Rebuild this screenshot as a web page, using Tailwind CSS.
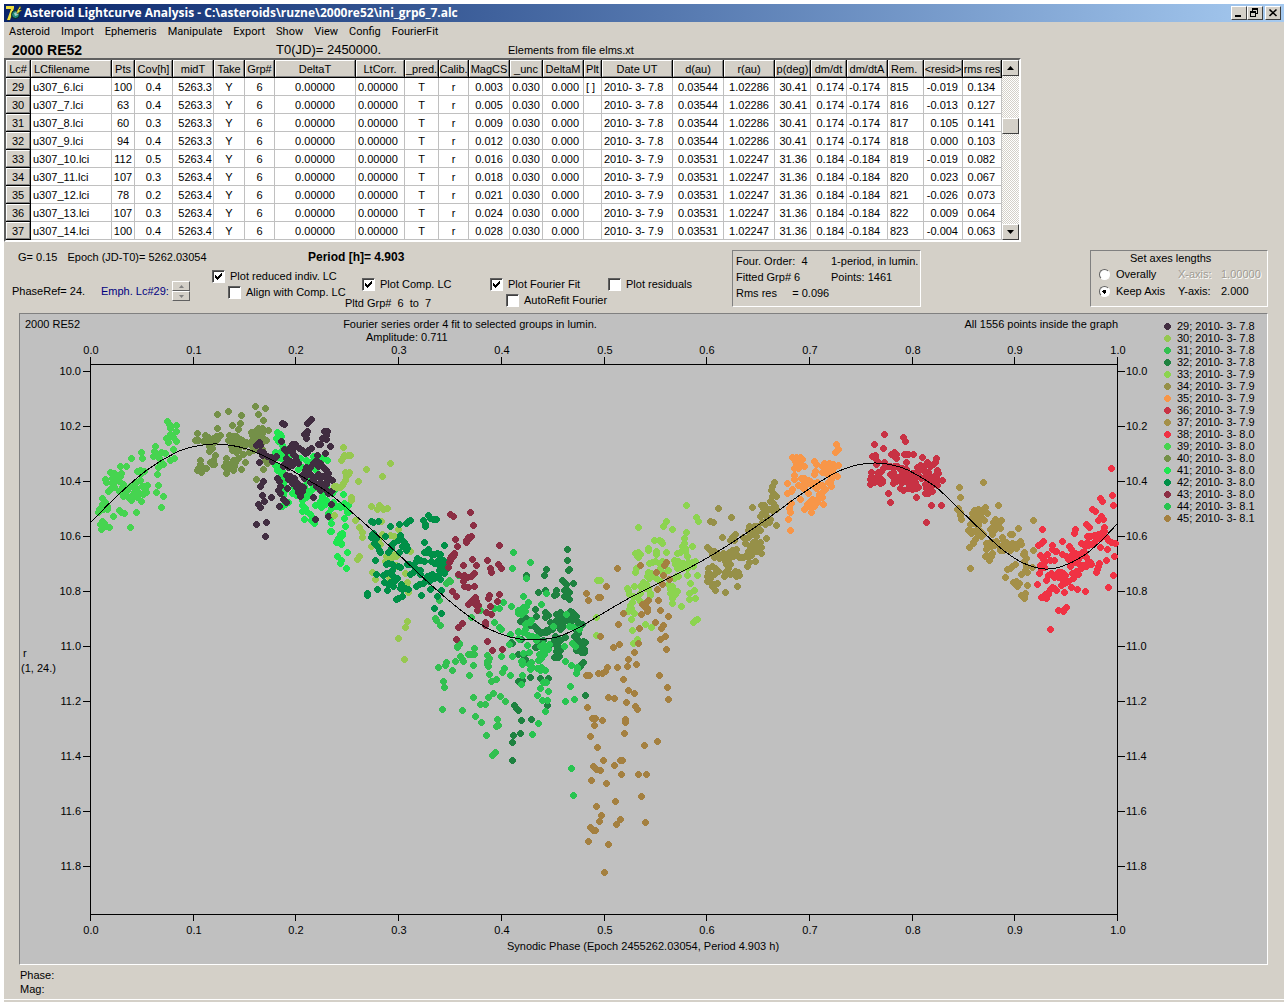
<!DOCTYPE html>
<html lang="en">
<head>
  <meta charset="UTF-8" />
  <meta name="viewport" content="width=device-width, initial-scale=1.0" />
  <title>Asteroid Lightcurve Analysis</title>
  <script src="https://cdn.jsdelivr.net/npm/@tailwindcss/browser@4"></script>
</head>
<body class="bg-white px-1 pt-1 font-['Liberation_Sans',Arial,sans-serif] text-[11px] leading-[14px] text-black">

  <div class="bg-[#d4d0c8] pb-[2px]">
    <!-- Title bar -->
    <header class="flex h-[18px] items-center bg-linear-to-r from-[#0a246a] to-[#a6caf0] pl-[2px] pr-[3px]">
      <svg class="h-4 w-4 shrink-0" viewBox="0 0 16 16">
        <path d="M3 5 L8 3 L3 16 L1 15 L5 6 Z" fill="#2b2b10" />
        <path d="M0 1 H8 L8 3 L4 15 H1 L5 4 H0 Z" fill="#f0e040" />
        <circle cx="9.500" cy="9.500" r="4" fill="#1f8a7a" stroke="#0a2020" />
        <path d="M8 8 l3 -1 1 3 -3 1z" fill="#9fd0c8" />
        <path d="M11 6 L14 1 L15 3 L13 5 L16 5 L11 9 Z" fill="#e8e040" stroke="#404010" stroke-width=".5" />
      </svg>
      <h1 class="ml-[2px] whitespace-nowrap font-['Open_Sans','Noto_Sans',sans-serif] text-[12px] font-bold text-white">Asteroid Lightcurve Analysis - C:\asteroids\ruzne\2000re52\ini_grp6_7.alc</h1>
      <div class="ml-auto flex">
        <button aria-label="Minimize" class="h-[14px] w-4 border border-t-white border-l-white border-r-[#404040] border-b-[#404040] bg-[#d4d0c8]">
          <svg class="h-3 w-[14px]" viewBox="0 0 14 12" shape-rendering="crispEdges"><path d="M3 8h6v2H3z" /></svg>
        </button>
        <button aria-label="Restore" class="h-[14px] w-4 border border-t-white border-l-white border-r-[#404040] border-b-[#404040] bg-[#d4d0c8]">
          <svg class="h-3 w-[14px]" viewBox="0 0 14 12" shape-rendering="crispEdges">
            <path d="M4 1h6v6H8V6h1V3H5v1H4zM2 4h6v6H2zM3 6v3h4V6z" fill-rule="evenodd" />
          </svg>
        </button>
        <button aria-label="Close" class="ml-[2px] h-[14px] w-4 border border-t-white border-l-white border-r-[#404040] border-b-[#404040] bg-[#d4d0c8]">
          <svg class="h-3 w-[14px]" viewBox="0 0 14 12"><path d="M3.500 2.500l7 6.500M10.500 2.500l-7 6.500" stroke="#000" stroke-width="1.600" /></svg>
        </button>
      </div>
    </header>

    <!-- Menu -->
    <nav class="flex h-[19px] items-center gap-[11px] pt-px pl-[5px] font-[Roboto,sans-serif]">
      <button>Asteroid</button>
      <button>Import</button>
      <button>Ephemeris</button>
      <button>Manipulate</button>
      <button>Export</button>
      <button>Show</button>
      <button>View</button>
      <button>Config</button>
      <button>FourierFit</button>
    </nav>

    <div class="flex h-[17px] items-center pl-2 whitespace-nowrap">
      <h2 class="w-[264px] text-[14px] font-bold">2000 RE52</h2>
      <span class="w-[232px] text-[13px]">T0(JD)= 2450000.</span>
      <span>Elements from file elms.xt</span>
    </div>

    <!-- Lightcurve list -->
    <div class="flex w-fit border-2 border-t-[#606060] border-l-[#606060] border-r-white border-b-white">
      <table class="w-[996px] table-fixed border-separate border-spacing-0 bg-white whitespace-nowrap">
        <colgroup>
          <col class="w-[25px]"><col class="w-[81px]"><col class="w-[23px]"><col class="w-[38px]">
          <col class="w-[41px]"><col class="w-[31px]"><col class="w-[30px]"><col class="w-[81px]">
          <col class="w-[49px]"><col class="w-[34px]"><col class="w-[30px]"><col class="w-[41px]">
          <col class="w-[33px]"><col class="w-[41px]"><col class="w-[18px]"><col class="w-[71px]">
          <col class="w-[51px]"><col class="w-[51px]"><col class="w-[36px]"><col class="w-[36px]">
          <col class="w-[41px]"><col class="w-[36px]"><col class="w-[39px]"><col class="w-[39px]">
        </colgroup>
        <thead><tr id="head"></tr></thead>
        <tbody id="rows"></tbody>
      </table>
      <!-- Scroll bar -->
      <div class="flex w-[17px] flex-col bg-[repeating-conic-gradient(#fff_0_25%,#d4d0c8_0_50%)] bg-[length:2px_2px]">
        <button aria-label="Scroll up" class="flex h-4 items-center justify-center border border-t-white border-l-white border-r-[#404040] border-b-[#404040] bg-[#d4d0c8]">
          <svg class="h-1 w-[7px]" viewBox="0 0 7 4"><path d="M0 4L3.500 0L7 4z" /></svg>
        </button>
        <div class="mt-[42px] h-4 border border-t-white border-l-white border-r-[#404040] border-b-[#404040] bg-[#d4d0c8]"></div>
        <button aria-label="Scroll down" class="mt-auto flex h-4 items-center justify-center border border-t-white border-l-white border-r-[#404040] border-b-[#404040] bg-[#d4d0c8]">
          <svg class="h-1 w-[7px]" viewBox="0 0 7 4"><path d="M0 0L3.500 4L7 0z" /></svg>
        </button>
      </div>
    </div>

    <!-- Controls -->
    <section class="flex h-[71px] items-start pt-2 pr-4 whitespace-nowrap">
      <div class="w-[208px] shrink-0 pl-2">
        <div class="flex gap-[10px] pl-[6px]">
          <span>G= 0.15</span>
          <span>Epoch (JD-T0)= 5262.03054</span>
        </div>
        <div class="mt-[17px] flex items-center">
          <span class="w-[89px]">PhaseRef= 24.</span>
          <span class="w-[71px] text-[#000080]">Emph. Lc#29:</span>
          <div class="flex flex-col">
            <button aria-label="Next curve" class="flex h-[10px] w-[18px] items-center justify-center border border-t-white border-l-white border-r-[#606060] border-b-[#606060]">
              <svg class="h-[3px] w-[5px]" viewBox="0 0 5 3"><path d="M0 3L2.500 0L5 3z" fill="#808080" /></svg>
            </button>
            <button aria-label="Previous curve" class="flex h-[10px] w-[18px] items-center justify-center border border-t-white border-l-white border-r-[#606060] border-b-[#606060]">
              <svg class="h-[3px] w-[5px]" viewBox="0 0 5 3"><path d="M0 0L2.500 3L5 0z" fill="#808080" /></svg>
            </button>
          </div>
        </div>
      </div>

      <div class="w-[520px] shrink-0">
        <p class="pl-24 text-[12px] font-bold">Period [h]= 4.903</p>
        <div class="flex items-start pt-1">
          <div class="w-[133px]">
            <label class="relative flex h-4 items-center gap-[5px]">
              <input type="checkbox" checked class="peer h-[13px] w-[13px] shrink-0 appearance-none border border-t-[#606060] border-l-[#606060] border-r-white border-b-white bg-white shadow-[inset_1px_1px_#404040]">
              <svg class="absolute left-[3px] hidden h-[7px] w-[7px] peer-checked:block" viewBox="0 0 7 7" shape-rendering="crispEdges"><path d="M0 2v3l2 2 5-5V-1L2 4z" /></svg>
              Plot reduced indiv. LC
            </label>
            <label class="relative ml-4 flex h-4 items-center gap-[5px]">
              <input type="checkbox" class="h-[13px] w-[13px] shrink-0 appearance-none border border-t-[#606060] border-l-[#606060] border-r-white border-b-white bg-white shadow-[inset_1px_1px_#404040]">
              Align with Comp. LC
            </label>
          </div>
          <div class="w-[145px] pt-2">
            <label class="relative ml-[17px] flex h-4 items-center gap-[5px]">
              <input type="checkbox" checked class="peer h-[13px] w-[13px] shrink-0 appearance-none border border-t-[#606060] border-l-[#606060] border-r-white border-b-white bg-white shadow-[inset_1px_1px_#404040]">
              <svg class="absolute left-[3px] hidden h-[7px] w-[7px] peer-checked:block" viewBox="0 0 7 7" shape-rendering="crispEdges"><path d="M0 2v3l2 2 5-5V-1L2 4z" /></svg>
              Plot Comp. LC
            </label>
            <p class="pt-1 whitespace-pre">Pltd Grp#  6  to  7</p>
          </div>
          <div class="w-[118px] pt-2">
            <label class="relative flex h-4 items-center gap-[5px]">
              <input type="checkbox" checked class="peer h-[13px] w-[13px] shrink-0 appearance-none border border-t-[#606060] border-l-[#606060] border-r-white border-b-white bg-white shadow-[inset_1px_1px_#404040]">
              <svg class="absolute left-[3px] hidden h-[7px] w-[7px] peer-checked:block" viewBox="0 0 7 7" shape-rendering="crispEdges"><path d="M0 2v3l2 2 5-5V-1L2 4z" /></svg>
              Plot Fourier Fit
            </label>
            <label class="relative ml-4 flex h-4 items-center gap-[5px]">
              <input type="checkbox" class="h-[13px] w-[13px] shrink-0 appearance-none border border-t-[#606060] border-l-[#606060] border-r-white border-b-white bg-white shadow-[inset_1px_1px_#404040]">
              AutoRefit Fourier
            </label>
          </div>
          <div class="pt-2">
            <label class="relative flex h-4 items-center gap-[5px]">
              <input type="checkbox" class="h-[13px] w-[13px] shrink-0 appearance-none border border-t-[#606060] border-l-[#606060] border-r-white border-b-white bg-white shadow-[inset_1px_1px_#404040]">
              Plot residuals
            </label>
          </div>
        </div>
      </div>

      <div class="grid h-[57px] w-[189px] shrink-0 grid-cols-[95px_1fr] content-start border border-t-[#808080] border-l-[#808080] border-r-white border-b-white pt-[2px] pl-[3px] leading-4 whitespace-pre">
        <span>Four. Order:  4</span><span>1-period, in lumin.</span>
        <span>Fitted Grp# 6</span><span>Points: 1461</span>
        <span>Rms res     = 0.096</span>
      </div>

      <fieldset class="ml-auto h-[57px] w-[178px] shrink-0 border border-t-[#808080] border-l-[#808080] border-r-white border-b-white pl-2">
        <p class="pl-[31px]">Set axes lengths</p>
        <div class="grid grid-cols-[79px_43px_1fr] pt-px leading-[17px]">
          <label class="flex items-center gap-[6px]">
            <input type="radio" name="axes" class="h-[11px] w-[11px] shrink-0 appearance-none rounded-full border border-t-[#606060] border-l-[#606060] border-r-white border-b-white bg-white">
            Overally
          </label>
          <span class="text-[#a09c94] [text-shadow:1px_1px_#fff]">X-axis:</span>
          <span class="text-[#a09c94] [text-shadow:1px_1px_#fff]">1.00000</span>
          <label class="flex items-center gap-[6px]">
            <input type="radio" name="axes" checked class="h-[11px] w-[11px] shrink-0 appearance-none rounded-full border border-t-[#606060] border-l-[#606060] border-r-white border-b-white bg-white checked:bg-[radial-gradient(circle,#000_0_2px,#fff_2px)]">
            Keep Axis
          </label>
          <span>Y-axis:</span>
          <span>2.000</span>
        </div>
      </fieldset>
    </section>

    <!-- Phase plot -->
    <main class="mr-4 ml-[15px] border border-t-[#808080] border-l-[#808080] border-r-white border-b-white bg-[#c0c0c0]">
      <svg id="plot" class="block w-full" viewBox="20 314 1247 650" font-size="11">
        <text x="25" y="328">2000 RE52</text>
        <text x="470" y="328" text-anchor="middle">Fourier series order 4 fit to selected groups in lumin.</text>
        <text x="366" y="341">Amplitude: 0.711</text>
        <text x="1118" y="328" text-anchor="end">All 1556 points inside the graph</text>
        <text x="23" y="657">r</text>
        <text x="21" y="672">(1, 24.)</text>
        <text x="643" y="950" text-anchor="middle">Synodic Phase (Epoch 2455262.03054, Period 4.903 h)</text>
        <g id="axes"></g>
        <g id="dots" shape-rendering="crispEdges"></g>
        <path id="fit" fill="none" stroke="#000" shape-rendering="crispEdges" />
        <g id="legend"></g>
      </svg>
    </main>

    <footer class="border-b border-white pt-[3px] pb-[3px] pl-4">
      <p>Phase:</p>
      <p>Mag:</p>
    </footer>
  </div>

  <script>
    const heads = ['Lc#', 'LCfilename', 'Pts', 'Cov[h]', 'midT', 'Take', 'Grp#', 'DeltaT', 'LtCorr.', '_pred.', 'Calib.', 'MagCS', '_unc', 'DeltaM', 'Plt', 'Date UT', 'd(au)', 'r(au)', 'p(deg)', 'dm/dt', 'dm/dtA', 'Rem.', '<resid>', 'rms res'];
    const aligns = ['text-center', 'text-left pl-[2px]', 'text-center', 'text-center', 'text-right pr-px', 'text-center', 'text-center', 'text-center', 'text-left pl-[2px]', 'text-center', 'text-center', 'text-center', 'text-center', 'text-right pr-1', 'text-left pl-[2px]', 'text-left pl-[2px]', 'text-center', 'text-center', 'text-right pr-[3px]', 'text-right pr-[2px]', 'text-left pl-[2px]', 'text-left pl-[2px]', 'text-right pr-1', 'text-right pr-[6px]'];
    // the two halves of the list only differ in date and geometry
    const first = ['2010- 3- 7.8', '0.03544', '1.02286', '30.41', '0.174', '-0.174'];
    const second = ['2010- 3- 7.9', '0.03531', '1.02247', '31.36', '0.184', '-0.184'];
    const curves = [
      ['100', '0.4', '0.003', '-0.019', '0.134'],
      ['63', '0.4', '0.005', '-0.013', '0.127'],
      ['60', '0.3', '0.009', '0.105', '0.141'],
      ['94', '0.4', '0.012', '0.000', '0.103'],
      ['112', '0.5', '0.016', '-0.019', '0.082'],
      ['107', '0.3', '0.018', '0.023', '0.067'],
      ['78', '0.2', '0.021', '-0.026', '0.073'],
      ['107', '0.3', '0.024', '0.009', '0.064'],
      ['100', '0.4', '0.028', '-0.004', '0.063'],
    ];

    document.getElementById('head').innerHTML = heads.map((h, i) =>
      `<th class="h-[18px] overflow-hidden border-r border-b border-black p-0 font-normal"><div class="h-[17px] border border-t-white border-l-white border-r-[#808080] border-b-[#808080] bg-[#d4d0c8] leading-[16px] ${i === 1 || i === 21 ? 'pl-[2px] text-left' : 'flex justify-center'}">${h.replace('<', '&lt;')}</div></th>`
    ).join('');

    document.getElementById('rows').innerHTML = curves.map((c, n) => {
      const cells = [29 + n, `u307_${6 + n}.lci`, c[0], c[1], n < 4 ? '5263.3' : '5263.4', 'Y', '6', '0.00000', '0.00000', 'T', 'r', c[2], '0.030', '0.000', n ? '' : '[ ]', ...(n < 4 ? first : second), 815 + n, c[3], c[4]];
      return '<tr>' + cells.map((v, i) => i === 0
        ? `<th class="h-[18px] border-r border-b border-black p-0 font-normal"><div class="h-[17px] border border-t-white border-l-white border-r-[#808080] border-b-[#808080] bg-[#d4d0c8] leading-[16px]">${v}</div></th>`
        : `<td class="h-[18px] border-r border-b border-[#c0c0c0] p-0 ${aligns[i]}">${v}</td>`).join('') + '</tr>';
    }).join('');

    // axes
    let axes = '<path d="M90.500 357V921M1117.500 357V921M90 364.500H1118M90 914.500H1118" stroke="#000"/>';
    for (let i = 0; i <= 10; i++) {
      const x = Math.round(90 + i * 102.7);
      const label = (i / 10).toFixed(1);
      axes += `<path d="M${x + 0.5} 357v7M${x + 0.5} 914v7" stroke="#000"/>`;
      axes += `<text x="${x + 1}" y="354" text-anchor="middle">${label}</text><text x="${x + 1}" y="934" text-anchor="middle">${label}</text>`;
    }
    for (let i = 0; i < 10; i++) {
      const y = 371 + i * 55;
      const label = (10 + i / 5).toFixed(1);
      axes += `<path d="M83 ${y + 0.5}h7M1118 ${y + 0.5}h7" stroke="#000"/>`;
      axes += `<text x="81" y="${y + 4}" text-anchor="end">${label}</text><text x="1126" y="${y + 4}">${label}</text>`;
    }
    document.getElementById('axes').innerHTML = axes;

    const colors = {
      29: '#412d41', 30: '#96c850', 31: '#32c050', 32: '#1e8240', 33: '#8cd450', 34: '#969048',
      35: '#f89648', 36: '#c83244', 37: '#a49048', 38: '#f03244', 39: '#46d450', 40: '#749048',
      41: '#1ee650', 42: '#009048', 43: '#8c2e44', 44: '#28c450', 45: '#a48040',
    };

    // [curve, x origin, y origin, x y pairs in thirds of a unit]; later runs are drawn on top
    const runs = [
      [39, 80, 380, '262 124 268 134 289 136 270 146 288 154 272 162 258 175 265 176 280 172 288 184 266 186 281 208 226 199 184 216 188 235 154 235 222 215 232 222 244 218 256 220 221 230 238 236 272 240 283 235 243 246 236 262 250 252 232 283 122 259 140 259 92 277 103 281 124 279 122 290 76 298 78 307 98 295 110 297 97 311 118 303 104 308 86 334 94 326 102 322 172 274 182 270 194 275 184 280 130 312 135 329 127 322 143 330 150 318 160 312 168 325 170 307 180 300 196 318 186 318 201 316 196 328 198 338 190 342 175 338 163 338 158 345 140 345 130 345 150 358 144 352 130 350 155 362 172 352 184 364 166 330 235 316 229 337 250 349 244 382 67 355 76 366 82 378 66 372 58 388 56 398 70 388 83 388 118 392 124 396 133 400 100 408 169 397 151 442 68 424 60 434 72 430 80 440 88 442 64 448 70 442 118 335'],
      [40, 80, 380, '526 79 556 85 445 94 412 103 484 106 535 103 550 121 481 130 457 136 475 148 412 145 352 160 352 180 345 181 354 182 376 166 384 172 390 180 400 174 410 170 421 166 380 184 392 190 402 186 388 200 388 214 396 204 412 178 370 183 448 166 460 168 470 170 446 182 456 184 466 182 480 178 486 180 462 192 470 196 478 194 486 196 492 198 500 186 508 190 514 184 520 178 516 166 514 158 528 152 536 146 546 146 552 150 566 152 530 164 540 166 548 160 544 172 528 176 522 190 534 196 544 190 552 178 560 181 516 200 528 206 520 212 536 212 546 208 454 198 464 206 458 212 468 216 476 212 490 222 508 218 407 226 400 240 396 252 404 254 390 248 362 242 360 254 356 264 352 270 364 278 372 266 380 265 440 236 438 246 432 258 442 258 442 268 440 280 456 250 466 246 460 240 474 236 462 258 460 271 484 268 496 247 562 250 556 240 550 268 530 298 554 222 560 232'],
      [41, 80, 380, '592 157 600 164 605 170 596 184 590 174 606 196 612 204 586 218 596 222 604 214 614 226 620 232 592 232 604 236 630 224 626 214 586 256 598 262 606 274 592 270 614 282 600 290 612 300 610 310 600 330 610 345 616 330 608 380 616 372 624 366 636 340 650 345 642 322 655 268 662 235 668 262 680 242 690 246 700 230 728 235 742 241 705 268 690 300 705 322 680 300 672 320 694 330 668 344 682 335 688 346 680 352 694 310 668 362 666 376 676 384 668 394 680 394 673 418 692 404 698 412 694 422 702 430 707 376 722 364 728 350 734 340 740 362 736 374 724 382 738 318 744 330 754 384 760 368 770 378 780 382 756 340 762 330 790 343 796 380 800 385 806 396 744 400 752 415 754 430 754 454 793 414 796 438 788 460 780 464 776 474 770 487 784 490 772 480 802 517 772 529 784 541 781 550 799 565'],
      [41, 330, 420, '40 223 54 256 44 250 30 256 20 258 52 276 44 294 46 318 38 340 32 352 24 362 34 372 22 368 52 397 22 409 34 420 30 430 49 445 4 310 2 334 37 345'],
      [29, 80, 380, '695 118 686 128 682 131 606 130 613 133 683 154 680 164 672 164 679 174 733 154 742 154 738 165 726 176 740 178 722 192 714 194 751 199 605 184 537 188 530 197 540 196 736 220 712 226 636 192 646 194 628 206 640 204 612 208 620 214 636 216 658 205 668 210 676 220 686 210 694 205 682 216 646 228 640 222 650 240 656 250 540 213 550 218 548 226 562 230 574 232 584 236 590 228 576 244 538 247 620 234 624 248 614 252 630 244 636 256 624 262 610 260 620 286 630 290 624 298 636 302 642 296 650 306 638 310 656 314 664 318 650 322 662 328 670 322 656 338 660 348 668 334 646 316 672 296 668 286 680 262 686 272 676 272 692 262 690 282 700 250 708 242 720 250 714 260 726 258 710 290 700 296 716 282 722 292 730 288 738 272 744 280 732 266 704 308 710 318 720 308 728 318 738 312 742 300 748 296 756 302 690 308 696 300 722 330 700 352 592 295 598 304 550 304 541 319 546 346 553 364 574 352 535 374 541 382 602 318 596 330 602 340 622 325 610 358 620 368 598 379 757 330 750 338 754 373 706 418 746 409 529 433 559 427 556 469 684 284 740 330 745 340'],
      [30, 80, 380, '790 202 806 226 790 232 784 241 797 276 802 285 797 300 788 315 778 322 770 320 764 318 763 405'],
      [30, 330, 420, '40 82 43 106 62 106 34 121 110 148 85 184 181 130 157 169 46 158 58 158 50 168 56 164 40 190 30 202 18 202 64 233 64 240 14 287 76 301 148 256 124 259 142 268 154 262 160 268 172 265 155 304 88 322 98 336 97 352 205 328 180 346 193 350 150 352 158 344 146 364 150 374 240 394 88 409 82 418 170 408 166 424 184 404 196 402 200 410 180 420 196 440 127 457 136 479 176 468 172 490 226 461 232 487 228 500 236 518 200 436 185 416 232 604 226 622 205 655 223 718 124 380 214 500'],
      [31, 330, 420, '357 482 350 490 352 487 328 541 317 596 331 616 424 592 388 670 382 680 433 685 433 703 424 703 414 703 390 708 398 718 376 724 430 736 349 727 346 736 325 742 368 750 472 706 478 714 472 724 474 738 362 485 386 465 452 572 320 600'],
      [31, 420, 620, '48 0 62 16 119 74 112 82 164 84 163 102 155 102 148 102 122 110 130 124 106 124 80 127 76 135 56 142 98 151 160 136 148 166 202 106 208 114 204 124 202 132 204 140 70 184 73 202 67 268 127 271 208 163 214 184 230 178 248 156 254 145 160 232 220 220 206 232 182 253 196 253 242 229 256 244 166 289 184 307 232 298 230 318 235 316 199 346 226 397 217 406 244 108 222 6 238 22 244 28 272 44 268 73'],
      [32, 330, 420, '712 388 712 421 718 448 714 450 649 448 643 466 589 466 697 480 704 488 708 492 730 490 626 517 646 510 679 511 680 522 702 512 710 508 718 516 702 528 712 530 718 538 672 526 616 568 646 576 654 586 646 592 618 589 692 576 686 584 694 582 678 584 720 574 728 576 734 584 740 590 716 590 724 596 708 602 720 606 678 600 688 600 696 598 686 610 672 606 662 606 742 604 750 612 756 612 738 618 614 618 622 630 628 634 640 636 632 640 648 632 656 634 664 622 690 628 700 620 590 596 580 590 740 630 746 640 706 652 676 650 684 654 690 660 682 668 676 672 686 680 640 660 628 664 617 682 660 672 690 690 680 694 734 650 738 662 746 660 752 668 760 664 766 668 748 680 756 684 764 688 752 694 740 692 760 698 680 712 688 710 576 704 564 704 584 716 575 658 545 668 760 727 750 740'],
      [32, 420, 620, '300 4 332 16 352 28 366 36 378 36 388 28 398 28 410 8 424 10 416 20 455 19 476 10 488 14 348 82 296 104 312 104 316 118 404 60 412 70 416 80 420 90 412 88 402 112 416 112 436 52 466 50 472 62 484 66 496 68 480 80 472 92 484 96 494 96 490 127 484 134 478 138 331 172 361 175 385 175 300 183 294 184 308 182 382 256 496 226 283 256 290 266 296 271 304 301 334 298 301 340 280 346 277 367 277 421 278 70'],
      [33, 600, 420, '115 322 259 256 289 292 295 304 199 303 190 319 217 328 259 337 254 354 163 361 178 361 184 363 188 370 145 385 144 392 169 394 199 397 277 379 252 370 248 378 256 386 256 394 262 408 232 400 242 398 105 400 115 398 116 412 122 404 112 408 170 404 158 428 148 430 166 424 178 430 186 424 196 432 222 420 234 424 226 432 240 436 250 430 266 426 276 426 286 424 280 438 254 440 262 446 232 444 246 446 108 446 106 457 180 446 146 456 154 460 142 468 148 474 160 466 190 460 228 470 222 474 262 466 292 466 234 468 206 450 170 476 180 484 130 488 124 496 138 492 146 506 136 504 122 498 103 499 82 506 84 512 88 524 206 494 216 500 210 508 222 514 232 514 226 524 212 520 216 536 218 550 244 559 272 490 283 511 268 520 268 538 286 535 150 520 152 526 120 520 100 530 112 532 96 546 120 544 90 556 94 564 84 574 96 574 104 580 88 568 94 598 97 631 136 613 154 622 292 598 280 607 286 602 112 658 100 669 108 664 0 481'],
      [33, 330, 420, '802 481 799 592 799 646'],
      [34, 600, 420, '524 188 518 198 514 210 522 222 516 230 530 229 512 244 520 250 526 258 530 268 518 272 510 268 484 257 492 256 490 266 502 268 496 276 488 280 482 288 500 290 510 298 498 304 508 308 488 308 496 312 530 316 457 262 355 265 394 292 331 304 340 307 448 318 462 320 472 320 480 332 470 338 456 330 446 330 500 355 367 352 406 344 396 352 402 362 390 360 436 358 444 352 430 352 436 370 452 346 462 342 470 350 460 366 470 368 480 368 464 376 484 382 476 384 458 386 468 394 452 378 446 394 485 400 322 382 332 390 344 394 352 400 336 404 344 412 358 414 350 404 408 388 398 390 388 398 380 402 370 400 378 414 390 412 400 408 392 396 408 404 418 412 430 412 438 406 446 412 454 406 424 412 384 426 378 434 390 434 386 446 376 424 466 425 442 439 448 428 326 444 336 440 346 446 354 454 326 456 332 462 344 464 322 470 322 484 332 476 330 488 340 494 352 490 338 500 346 511 376 517 412 499 376 456 384 458 374 468 390 462 406 454 414 458 404 464 418 466 410 470'],
      [35, 600, 420, '709 73 714 88 706 98 578 112 590 112 600 112 608 118 586 124 598 122 590 134 604 132 612 140 584 144 596 144 643 124 650 132 674 130 688 130 700 134 715 136 668 140 680 142 692 146 704 142 646 154 642 164 666 156 680 160 692 158 700 160 676 150 690 166 712 169 694 178 686 186 690 190 694 200 582 166 582 178 604 176 614 174 624 180 612 186 630 184 610 194 596 196 604 200 620 194 562 190 578 208 574 214 562 220 628 190 640 190 652 186 642 200 660 196 668 196 650 204 612 208 626 220 676 208 668 216 658 224 666 232 654 236 652 246 638 238 628 248 636 252 642 258 626 260 614 268 634 264 634 276 644 248 601 237 574 250 568 264 570 278 565 298 571 331 670 253 622 252'],
      [36, 850, 420, '103 43 160 52 166 64 73 73 100 85 133 98 124 103 140 103 134 108 140 116 168 102 174 104 162 103 190 103 217 112 68 108 76 106 76 114 82 124 78 134 169 127 260 115 256 128 232 126 238 134 250 134 226 136 242 140 210 136 202 142 214 148 102 128 106 136 112 140 100 146 94 154 84 156 122 140 132 140 142 140 150 148 158 144 160 156 168 148 130 156 120 164 128 170 134 178 140 172 150 170 160 166 170 168 178 162 186 160 190 170 180 176 196 176 200 158 206 166 214 174 226 156 234 158 240 170 230 176 262 152 266 160 256 166 248 172 254 182 266 180 278 181 228 164 64 158 64 168 60 178 70 176 80 172 90 176 84 182 98 180 98 188 74 188 61 193 90 190 130 190 140 184 150 184 158 188 168 182 174 190 184 186 190 196 180 200 174 206 186 208 160 211 150 205 198 206 206 202 196 186 226 192 234 196 244 188 252 194 262 196 242 202 236 210 246 214 228 204 226 220 234 220 115 220 121 247 199 232 244 256 274 256 229 307'],
      [37, 850, 420, '400 187 328 202 331 232 445 256 550 301 505 325 406 262 402 270 412 280 374 270 384 268 392 272 368 280 376 284 390 282 366 292 378 294 400 298 392 302 404 302 322 268 330 276 324 264 330 286 334 298 436 298 444 304 454 300 430 308 440 314 450 324 444 316 430 320 420 328 430 334 438 326 426 342 362 312 374 310 384 316 356 330 368 334 378 330 390 334 364 340 400 342 394 350 384 346 376 358 370 366 370 370 358 382 481 343 486 343 456 352 460 362 468 366 410 370 420 368 430 366 440 364 412 376 424 380 434 376 444 376 454 380 464 376 474 376 486 370 496 374 506 376 512 364 514 374 476 384 482 392 460 390 450 390 408 388 427 401 424 408 406 410 416 410 418 420 490 382 500 384 524 396 520 404 530 414 522 404 550 391 361 445 524 424 530 438 547 442 526 452 532 457 514 463 496 433 480 444 488 440 472 448 466 472 490 487 500 484 508 490 496 494 502 500 532 496 526 520 514 526 524 526 522 536 518 530'],
      [38, 850, 420, '784 145 787 226 790 256 751 235 757 244 727 268 736 274 577 328 676 328 673 340 709 313 718 322 754 290 760 298 752 294 744 300 763 322 756 336 764 334 580 364 574 370 565 376 607 376 637 364 694 369 712 349 722 350 732 346 740 350 746 344 738 358 734 366 726 372 716 376 706 378 712 366 750 356 768 352 774 360 784 368 795 370 750 382 772 388 658 379 664 388 616 394 620 394 606 388 638 403 648 410 656 412 668 404 676 400 684 402 696 396 704 396 662 420 672 420 684 418 690 410 698 404 708 412 676 428 654 418 660 440 570 406 592 404 580 418 586 424 600 422 612 422 570 436 580 436 574 444 584 442 567 460 696 436 706 440 712 430 722 426 724 432 710 440 694 446 690 436 748 430 746 440 742 448 740 456 769 421 793 409 790 466 604 460 596 466 590 480 614 466 626 456 634 456 632 466 640 460 646 466 634 476 626 472 612 472 680 454 686 464 672 460 666 460 670 474 656 484 650 488 642 490 634 496 562 493 600 508 606 502 612 504 620 512 664 502 683 508 707 514 643 517 592 520 596 524 590 534 586 524 574 532 582 532 775 502 625 571 640 574 649 562 644 568 601 628'],
      [42, 330, 420, '295 286 302 296 310 298 320 298 280 301 286 312 286 318 241 301 234 305 228 310 208 313 181 319 124 304 130 306 146 304 128 342 134 350 140 354 124 352 130 340 167 349 132 370 142 380 148 390 152 396 211 346 206 360 214 358 222 368 186 374 184 384 190 370 218 380 228 376 232 386 228 392 176 398 208 396 283 367 343 376 136 421 294 388 290 397 304 404 314 404 322 400 332 404 284 397 304 425 312 430 322 424 332 416 326 432 262 416 258 424 270 420 283 424 340 422 346 430 336 438 250 436 238 432 232 434 176 430 186 434 194 438 170 434 204 440 212 442 336 450 346 452 342 460 328 450 258 448 250 457 270 450 241 462 272 462 139 463 188 452 180 458 168 460 188 466 160 466 292 470 300 466 308 462 304 478 312 474 298 484 290 480 284 488 332 478 202 476 196 482 188 484 180 486 164 488 176 494 280 490 268 494 260 500 214 494 212 506 190 500 226 504 234 508 216 508 142 508 171 512 302 508 334 512 112 520 112 525 275 526 322 529 217 529 199 538 205 535 313 565 334 580 350 430 326 466'],
      [44, 330, 420, '550 397 601 427 547 445 589 475 580 529 649 519 634 553 596 547 544 559 520 547 508 565 492 566 566 570 572 578 580 562 590 560 586 574 574 584 566 580 604 601 589 610 586 628 493 607 508 622 514 628 541 643 670 619 710 583 565 638 565 656 594 647 606 650 539 673 548 709 514 710 592 676 580 700 618 662 632 680 640 672 656 688 640 692 628 704 642 704 634 714 626 722 578 724 578 734 598 734 524 744 606 742 634 742 704 679 736 678 730 622 748 628 706 724 724 736 742 742'],
      [44, 420, 620, '316 12 330 6 400 19 296 34 310 38 325 46 349 52 298 58 322 76 370 76 388 74 378 84 374 94 328 97 368 104 364 112 358 120 278 109 304 124 308 134 334 127 434 79 458 70 466 79 436 124 454 136 473 148 470 160 352 146 362 150 376 151 331 148 272 166 308 166 304 193 370 187 380 186 361 205 385 214 352 226 367 241 382 241 376 274 451 199 463 238 436 244 355 310 337 343 454 445 460 526 478 28 448 20'],
      [43, 330, 420, '421 277 361 283 370 289 430 316 376 358 425 348 414 352 410 360 408 368 418 356 382 379 508 376 374 400 364 408 360 416 370 410 358 426 362 420 355 442 427 418 400 436 439 436 472 421 506 432 514 444 481 444 484 456 385 463 434 460 424 468 404 466 412 472 396 470 400 484 404 500 416 502 433 499 367 514 380 529 478 526 476 536 508 523 502 544 436 532 428 540 440 544 422 548 414 554 446 556 436 552 442 571 481 559 468 576 484 583 466 606 466 615 397 610 386 622 379 658 472 664 487 691 517 688 374 404'],
      [45, 330, 420, '769 520 775 541 805 532'],
      [45, 600, 420, '52 445 19 499 121 436 199 427 194 436 169 457 190 466 208 478 187 493 172 508 176 541 181 571 205 589 145 541 136 550 126 552 142 564 142 574 136 562 124 583 70 580 55 613 166 607 190 616 184 625 118 625 196 649 181 658 115 670 58 673 40 682 2 649 0 532 199 688'],
      [45, 420, 620, '595 13 541 49 706 6 730 16 725 25 736 49 722 58 739 88 658 25 655 70 598 73 580 82 643 97 625 118 649 133 622 139 592 142 562 142 556 154 548 160 535 160 500 166 508 166 610 178 718 166 742 202 745 238 625 211 643 220 566 232 584 235 619 247 646 259 652 268 502 262 518 295 526 295 547 301 523 316 616 298 616 307 613 340 511 349 712 364 673 376 532 382 550 421 602 421 608 421 520 439 530 448 541 451 583 436 604 463 655 463 679 463 514 481 559 490 664 529 586 544 529 559 544 586 538 604 601 598 589 613 676 607 511 622 520 632 526 630 505 664 565 673 553 757'],
    ];

    document.getElementById('dots').innerHTML = runs.map(([id, ox, oy, list]) => {
      const v = list.split(' ').map(Number);
      let out = '';
      for (let i = 0; i < v.length; i += 2) {
        out += `<circle cx="${Math.floor(ox + v[i] / 3) + 0.5}" cy="${Math.floor(oy + v[i + 1] / 3) + 0.5}" r="3.300"/>`;
      }
      return `<g fill="${colors[id]}">${out}</g>`;
    }).join('');

    // Fourier fit, smoothed through its knots
    const knots = [[90, 523], [117, 496], [147, 470], [177, 452], [197, 446], [217, 444], [247, 449], [280, 464], [313, 483], [330, 494], [363, 522], [397, 553], [430, 584], [463, 612], [487, 628], [510, 637], [531, 640], [557, 637], [580, 627], [600, 615], [633, 596], [667, 579], [700, 562], [733, 542], [767, 519], [800, 495], [833, 474], [853, 466], [876, 463], [900, 467], [917, 475], [937, 488], [957, 507], [983, 532], [1003, 550], [1023, 563], [1045, 569], [1063, 566], [1083, 556], [1100, 542], [1117, 524]];
    let d = `M${knots[0]}`;
    for (let i = 0; i < knots.length - 1; i++) {
      const a = knots[i - 1] || knots[i], b = knots[i], c = knots[i + 1], e = knots[i + 2] || c;
      d += `C${b[0] + (c[0] - a[0]) / 6} ${b[1] + (c[1] - a[1]) / 6} ${c[0] - (e[0] - b[0]) / 6} ${c[1] - (e[1] - b[1]) / 6} ${c[0]} ${c[1]}`;
    }
    document.getElementById('fit').setAttribute('d', d);

    document.getElementById('legend').innerHTML = Object.keys(colors).map((id, i) => {
      const day = id < 33 ? '7.8' : id < 38 ? '7.9' : id < 44 ? '8.0' : '8.1';
      return `<circle cx="1167.500" cy="${326.5 + i * 12}" r="3.300" fill="${colors[id]}" shape-rendering="crispEdges"/><text x="1177" y="${330 + i * 12}">${id}; 2010- 3- ${day}</text>`;
    }).join('');
  </script>

</body>
</html>
